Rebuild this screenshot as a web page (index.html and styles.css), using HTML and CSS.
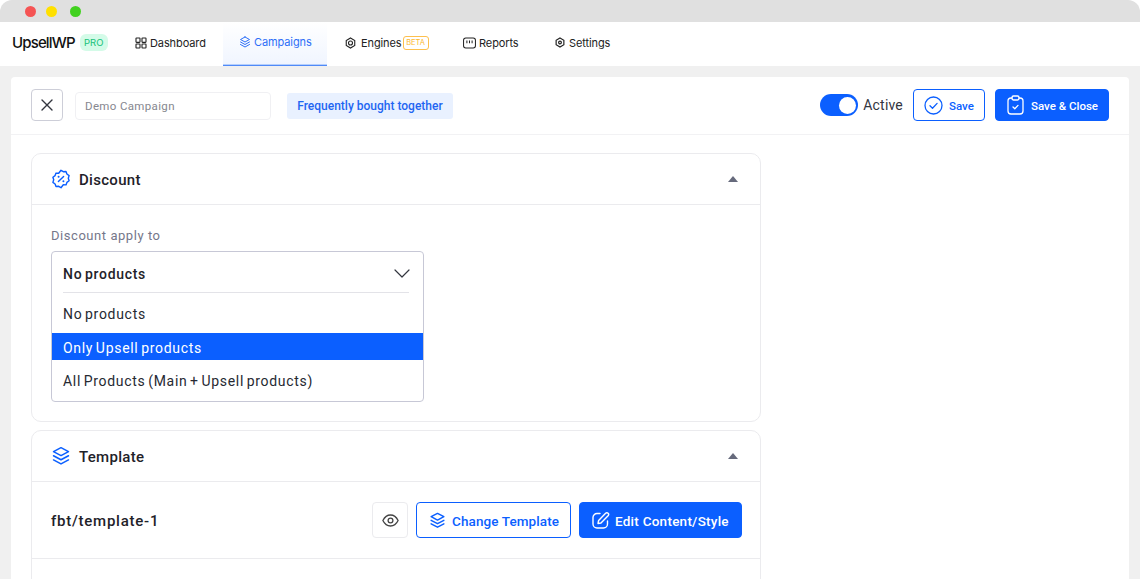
FILE: index.html
```html
<!DOCTYPE html>
<html lang="en">
<head>
<meta charset="utf-8">
<title>UpsellWP</title>
<link rel="stylesheet" href="styles.css">
</head>
<body>
<div class="window">
  <div class="titlebar"><i class="dot red"></i><i class="dot yellow"></i><i class="dot green"></i></div>
  <nav class="nav">
    <div class="brand"><span class="logo">UpsellWP</span><span class="pro">PRO</span></div>
    <a class="tab t-dash"><svg width="12" height="12" viewBox="0 0 12 12" fill="none" stroke="#222" stroke-width="1.1"><rect x="1" y="1" width="4" height="4.4" rx=".6"/><rect x="7" y="1" width="4" height="4.4" rx=".6"/><rect x="1" y="7" width="4" height="4" rx=".6"/><rect x="7" y="7" width="4" height="4" rx=".6"/></svg>Dashboard</a>
    <a class="tab t-camp active"><svg width="12" height="12" viewBox="0 0 24 24" fill="none" stroke="#2d6ff7" stroke-width="2" stroke-linejoin="round" stroke-linecap="round"><path d="M12 2 3 7l9 5 9-5-9-5Z"/><path d="m3 12 9 5 9-5"/><path d="m3 17 9 5 9-5"/></svg>Campaigns</a>
    <a class="tab t-eng"><svg width="11" height="12" viewBox="0 0 22 24" fill="none" stroke="#222" stroke-width="2.2"><path d="M11 2l8.500 5v10L11 22l-8.500-5V7L11 2Z"/><circle cx="11" cy="12" r="4"/></svg>Engines<span class="beta">BETA</span></a>
    <a class="tab t-rep"><svg width="13" height="12" viewBox="0 0 14 12" fill="none" stroke="#222" stroke-width="1.1"><rect x=".6" y=".6" width="12.8" height="10.8" rx="2.4"/><path d="M4.2 3.4v3M7 3.4v3M9.8 3.4v3"/></svg>Reports</a>
    <a class="tab t-set"><svg width="10" height="11" viewBox="0 0 22 24" fill="none" stroke="#222" stroke-width="2.6"><path d="M11 2l8.500 5v10L11 22l-8.500-5V7L11 2Z"/><circle cx="11" cy="12" r="3"/></svg>Settings</a>
  </nav>
  <main class="canvas">
    <section class="panel">
      <header class="toolbar">
        <button class="close"><svg width="12" height="12" viewBox="0 0 12 12" stroke="#33363f" stroke-width="1.4" stroke-linecap="round"><path d="M1 1l10 10M11 1 1 11"/></svg></button>
        <div class="name">Demo Campaign</div>
        <div class="type">Frequently bought together</div>
        <div class="actions">
          <span class="switch"><i></i></span><span class="status">Active</span>
          <button class="btn outline save"><svg width="19" height="19" viewBox="0 0 19 19" fill="none" stroke="#0b5fff" stroke-width="1.3" stroke-linecap="round" stroke-linejoin="round"><circle cx="9.500" cy="9.500" r="8.500"/><path d="m6 9.800 2.500 2.400 4.600-4.800"/></svg>Save</button>
          <button class="btn solid saveclose"><svg width="17" height="20" viewBox="0 0 17 20" fill="none" stroke="#fff" stroke-width="1.3" stroke-linecap="round" stroke-linejoin="round"><path d="M5 3H4a3 3 0 0 0-3 3v10a3 3 0 0 0 3 3h9a3 3 0 0 0 3-3V6a3 3 0 0 0-3-3h-1"/><rect x="5" y="1" width="7" height="4" rx="1.400"/><path d="m6 12 1.800 1.800 3.200-3.400"/></svg>Save &amp; Close</button>
        </div>
      </header>
      <div class="content">
        <article class="card discount">
          <div class="card-head">
            <svg width="20" height="20" viewBox="0 0 20 20" fill="none" stroke="#0b5fff" stroke-width="1.4" stroke-linecap="round" stroke-linejoin="round"><path d="M10 1.300l2.300 1.400 2.700-.2.900 2.500 2.200 1.600-.8 2.600.8 2.600-2.200 1.600-.9 2.500-2.700-.2L10 18.700l-2.300-1.400-2.700.2-.9-2.500-2.200-1.600.8-2.600-.8-2.600 2.200-1.600.9-2.500 2.700.2L10 1.300Z"/><path d="m7.400 12.600 5.200-5.200"/><path d="M7.600 7.800h.01M12.400 12.200h.01" stroke-width="2"/></svg>
            <h2>Discount</h2><i class="caret"></i>
          </div>
          <div class="card-body">
            <label class="field-label">Discount apply to</label>
            <div class="select">
              <div class="select-value"><span>No products</span><svg width="16" height="9" viewBox="0 0 16 9" fill="none" stroke="#33363f" stroke-width="1.2" stroke-linecap="round" stroke-linejoin="round"><path d="m1 1 7 7 7-7"/></svg></div>
              <ul class="options">
                <li class="opt-a">No products</li>
                <li class="opt-b selected">Only Upsell products</li>
                <li class="opt-c">All Products (Main + Upsell products)</li>
              </ul>
            </div>
          </div>
        </article>
        <article class="card template">
          <div class="card-head">
            <svg width="20" height="20" viewBox="0 0 24 24" fill="none" stroke="#0b5fff" stroke-width="1.8" stroke-linejoin="round" stroke-linecap="round"><path d="M12 2 3 6.700l9 4.800 9-4.800L12 2Z"/><path d="m3 11.700 9 4.800 9-4.800"/><path d="m3 16.700 9 4.800 9-4.800"/></svg>
            <h2>Template</h2><i class="caret"></i>
          </div>
          <div class="template-row">
            <strong>fbt/template-1</strong>
            <div class="row-actions">
              <button class="eye"><svg width="17" height="13" viewBox="0 0 17 13" fill="none" stroke="#444" stroke-width="1.3"><path d="M.9 6.500C2.600 3 5.300 1 8.500 1s5.900 2 7.600 5.500C14.400 10 11.700 12 8.500 12S2.600 10 .9 6.500Z"/><circle cx="8.500" cy="6.500" r="2.400"/></svg></button>
              <button class="btn outline change"><svg width="17" height="17" viewBox="0 0 24 24" fill="none" stroke="#0b5fff" stroke-width="2" stroke-linejoin="round" stroke-linecap="round"><path d="M12 2 3 6.700l9 4.800 9-4.800L12 2Z"/><path d="m3 11.700 9 4.800 9-4.800"/><path d="m3 16.700 9 4.800 9-4.800"/></svg>Change Template</button>
              <button class="btn solid edit"><svg width="18" height="18" viewBox="0 0 18 18" fill="none" stroke="#fff" stroke-width="1.4" stroke-linecap="round" stroke-linejoin="round"><path d="M8 2.500H5a4 4 0 0 0-4 4v6.500a4 4 0 0 0 4 4h6.500a4 4 0 0 0 4-4v-3"/><path d="M6 12.500l.6-3L13.600 2.300a1.800 1.800 0 0 1 2.500 0 1.800 1.800 0 0 1 0 2.500L9 12l-3 .5Z"/></svg>Edit Content/Style</button>
            </div>
          </div>
        </article>
      </div>
    </section>
  </main>
</div>
</body>
</html>
```
FILE: styles.css
```css
* { box-sizing: border-box; }
html, body { margin: 0; height: 100%; overflow: hidden; background: #fff; }
body { font-family: "Roboto", "Liberation Sans", sans-serif; color: #1f2229; }
button { font: inherit; cursor: pointer; }
h2, ul { margin: 0; padding: 0; }
.window { width: 1140px; height: 579px; display: flex; flex-direction: column; overflow: hidden; }

.titlebar { height: 22px; background: #e0e0e0; border-radius: 12px 12px 0 0; display: flex; align-items: center; gap: 10px; padding: 1px 0 0 25px; flex: none; }
.dot { width: 11px; height: 11px; border-radius: 50%; display: block; }
.red { background: #f55454; }
.yellow { background: #ffe000; }
.green { background: #41d11f; margin-left: 3px; }

.nav { height: 44px; background: #fff; display: flex; align-items: stretch; flex: none; font-family: "Inter", sans-serif; font-size: 11px; letter-spacing: -.1px; color: #222; }
.brand { width: 124px; padding: 0 0 3px 12px; display: flex; align-items: center; gap: 5px; }
.logo { font-size: 15px; font-weight: 500; letter-spacing: -.85px; color: #111; }
.pro { width: 28px; height: 17px; border-radius: 6px; background: #d4fbe8; color: #17c27a; font-size: 9.500px; letter-spacing: 0; display: flex; align-items: center; justify-content: center; }
.tab { display: flex; align-items: center; gap: 3px; padding-bottom: 3px; }
.t-dash { width: 99px; padding-left: 11px; }
.t-camp { width: 104px; padding-left: 16px; }
.t-eng { width: 118px; padding-left: 18px; gap: 5px; }
.t-rep { width: 91px; padding-left: 18px; }
.t-set { padding-left: 19px; gap: 4px; }
.active { color: #2d6ff7; background: linear-gradient(#fff, #f0f5ff); border-bottom: 1px solid #4f8af8; box-shadow: inset 0 -1px 0 #b5cffc; }
.beta { margin-left: -4px; width: 26px; height: 14px; border: 1px solid #fdc04e; border-radius: 3px; color: #fdb933; font-size: 7.500px; letter-spacing: 0; display: flex; align-items: center; justify-content: center; }

.canvas { flex: 1; min-height: 0; background: #f0f0f0; padding: 11px 11px 0; }
.panel { height: 100%; background: #fff; border-radius: 4px 4px 0 0; overflow: hidden; }

.toolbar { height: 58px; border-bottom: 1px solid #f2f2f4; padding: 12px 20px 0; display: flex; align-items: flex-start; }
.close { width: 32px; height: 32px; padding: 0; background: #fff; border: 1px solid #cdced8; border-radius: 4px; display: flex; align-items: center; justify-content: center; }
.name { width: 196px; height: 28px; margin: 3px 0 0 12px; border: 1px solid #f0f0f3; border-radius: 4px; padding-left: 9px; display: flex; align-items: center; font-size: 11.500px; letter-spacing: .35px; color: #86878f; }
.type { margin: 4px 0 0 16px; width: 166px; height: 26px; border-radius: 3px; background: #e9f1ff; color: #1f66f2; font-size: 12px; font-weight: 500; display: flex; align-items: center; justify-content: center; }
.actions { margin-left: auto; display: flex; align-items: center; height: 32px; }
.switch { width: 38px; height: 22px; border-radius: 11px; background: #0b5fff; position: relative; display: block; }
.switch i { position: absolute; right: 2px; top: 2.500px; width: 17px; height: 17px; border-radius: 50%; background: #fff; }
.status { margin: 0 10px 0 5px; font-size: 14px; letter-spacing: .2px; color: #33363f; }
.btn { display: flex; align-items: center; border-radius: 4px; font-weight: 500; padding: 2px 0 0; }
.btn svg { margin-top: -2px; }
.outline { background: #fff; border: 1px solid #0b5fff; color: #0b5fff; }
.solid { background: #0b5fff; border: 1px solid #0b5fff; color: #fff; }
.save { width: 72px; height: 32px; padding-left: 10px; gap: 6px; font-size: 11.500px; }
.saveclose { width: 114px; height: 32px; margin-left: 10px; padding-left: 11px; gap: 7px; font-size: 11.500px; }

.content { padding: 18px 20px 0; display: flex; flex-direction: column; gap: 8px; }
.card { width: 730px; border: 1px solid #ebebee; border-radius: 10px; background: #fff; flex: none; }
.card-head { height: 51px; border-bottom: 1px solid #ebebee; padding: 0 22px 0 19px; display: flex; align-items: center; gap: 8px; }
.card-head h2 { font-size: 15px; font-weight: 500; letter-spacing: .3px; color: #1f2229; padding-top: 2px; }
.caret { margin-left: auto; width: 0; height: 0; border: 5px solid transparent; border-top: 0; border-bottom: 6px solid #666a7c; }
.discount { height: 269px; }
.card-body { padding: 23px 19px 0; }
.field-label { display: block; font-size: 13px; letter-spacing: .55px; color: #75778a; line-height: 16px; margin-bottom: 7px; }
.select { width: 373px; height: 151px; border: 1px solid #c7c8d6; border-radius: 4px; font-size: 14px; letter-spacing: .7px; word-spacing: -1.500px; }
.select-value { height: 41px; margin: 0 14px 0 11px; padding-top: 4px; border-bottom: 1px solid #e3e3e8; display: flex; align-items: center; justify-content: space-between; font-weight: 500; color: #1f2229; }
.select-value svg { margin: -2px -1px 0 0; }
.options { list-style: none; padding-top: 7px; }
.options li { padding-left: 11px; display: flex; align-items: center; color: #262932; }
.opt-a { height: 33px; padding-bottom: 6px; }
.opt-b { height: 27px; padding-top: 2px; }
.opt-c { height: 41px; padding-top: 1px; }
.options .selected { background: #0b5fff; color: #fff; }

.template { height: 200px; }
.template-row { height: 77px; border-bottom: 1px solid #ebebee; padding: 0 18px 0 19px; display: flex; align-items: center; justify-content: space-between; }
.template-row strong { font-size: 15px; font-weight: 500; letter-spacing: .75px; color: #1f2229; padding-top: 2px; }
.row-actions { display: flex; align-items: center; gap: 8px; }
.eye { width: 36px; height: 36px; padding: 0; background: #fff; border: 1px solid #ebebee; border-radius: 4px; display: flex; align-items: center; justify-content: center; }
.change { width: 155px; height: 36px; padding-left: 12px; gap: 6px; font-size: 13.500px; letter-spacing: .1px; }
.edit { width: 163px; height: 36px; padding-left: 12px; gap: 5px; font-size: 13.500px; letter-spacing: .25px; }
```
